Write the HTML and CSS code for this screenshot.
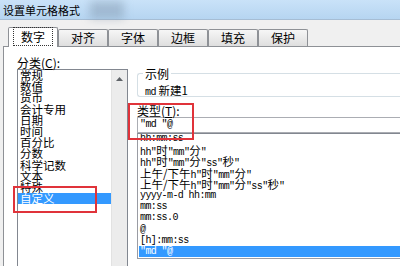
FILE: index.html
```html
<!DOCTYPE html>
<html>

<head>
    <meta charset="utf-8">
    <link rel="stylesheet" href="styles.css">
    <title>设置单元格格式</title>
</head>

<body>
    <div class="titlebar">
        <span class="title">设置单元格格式</span>
        <span class="smudge"></span>
    </div>

    <div class="dialog">
        <div class="tabs">
            <div class="tab active"><span class="focus">数字</span></div>
            <div class="tab">对齐</div>
            <div class="tab">字体</div>
            <div class="tab">边框</div>
            <div class="tab">填充</div>
            <div class="tab">保护</div>
        </div>

        <div class="panel">
            <div class="cat">
                <div class="lbl">分类(<u>C</u>):</div>
                <div class="catlist">
                    <ul class="items">
                        <li>常规</li>
                        <li>数值</li>
                        <li>货币</li>
                        <li>会计专用</li>
                        <li>日期</li>
                        <li>时间</li>
                        <li>百分比</li>
                        <li>分数</li>
                        <li>科学记数</li>
                        <li>文本</li>
                        <li>特殊</li>
                        <li class="sel">自定义</li>
                    </ul>
                    <div class="vscroll">
                        <div class="btn">
                            <svg width="7" height="4" viewBox="0 0 7 4"><path d="M0 4 L3.5 0 L7 4 Z" fill="#5f6368"/></svg>
                        </div>
                    </div>
                </div>
            </div>

            <div class="type">
                <fieldset class="sample">
                    <legend>示例</legend>
                    <div class="sample-text"><span class="m">md</span> 新建1</div>
                </fieldset>

                <div class="lbl lbl-type">类型(<u>T</u>):</div>
                <div class="typebox m">"md "@</div>

                <ul class="typelist">
                    <li class="m cut">hh:mm:ss</li>
                    <li class="m">hh"<span class="zh">时</span>"mm"<span class="zh">分</span>"</li>
                    <li class="m">hh"<span class="zh">时</span>"mm"<span class="zh">分</span>"ss"<span class="zh">秒</span>"</li>
                    <li class="m"><span class="zh">上午/下午</span>h"<span class="zh">时</span>"mm"<span class="zh">分</span>"</li>
                    <li class="m"><span class="zh">上午/下午</span>h"<span class="zh">时</span>"mm"<span class="zh">分</span>"ss"<span class="zh">秒</span>"</li>
                    <li class="m">yyyy-m-d hh:mm</li>
                    <li class="m">mm:ss</li>
                    <li class="m">mm:ss.0</li>
                    <li class="m">@</li>
                    <li class="m">[h]:mm:ss</li>
                    <li class="m sel">"md "@</li>
                </ul>
            </div>

            <!-- rote Markierungen -->
            <div class="mark mark-cat"></div>
            <div class="mark mark-type"></div>
        </div>
    </div>
</body>

</html>
```

FILE: styles.css
```css
body {
    margin: 0;
    width: 400px;
    height: 266px;
    overflow: hidden;
    background-color: #f0f0f0;
    font-family: "Noto Sans CJK SC", "Liberation Sans", sans-serif;
    font-size: 12px;
    color: #000;
}

.titlebar {
    height: 20px;
    box-sizing: border-box;
    display: flex;
    align-items: center;
    padding-left: 3px;
    background: linear-gradient(#c9e2f8, #b6d5f1);
    border-bottom: 1px solid #a6bdd4;
}

.title {
    font-size: 11px;
    line-height: 14px;
}

.smudge {
    width: 34px;
    height: 18px;
    margin-left: 10px;
    background-color: rgba(105, 125, 150, 0.35);
    filter: blur(4px);
}

.dialog {
    padding: 7px 0 0 3px;
}

.tabs {
    display: flex;
    align-items: flex-end;
    height: 19px;
    margin-left: 5px;
}

.tab {
    width: 50px;
    height: 17px;
    box-sizing: border-box;
    border: 1px solid #8e9196;
    border-bottom: none;
    border-radius: 2px 2px 0 0;
    background: linear-gradient(#f6f6f6, #dedede);
    text-align: center;
    line-height: 15px;
}

.tab.active {
    height: 20px;
    margin-bottom: -1px;
    background: #fff;
    position: relative;
    z-index: 1;
    line-height: 18px;
}

.focus {
    outline: 1px dotted #333;
    padding: 0 7px;
}

.panel {
    position: relative;
    display: flex;
    height: 210px;
    padding: 9px 0 0 13px;
    background-color: #fff;
    border-top: 1px solid #8e9196;
    border-left: 1px solid #8e9196;
    overflow: hidden;
}

.lbl {
    line-height: 13px;
}

.cat {
    width: 111px;
    flex-shrink: 0;
}

.catlist {
    display: flex;
    height: 197px;
    box-sizing: border-box;
    border: 1px solid #828790;
    border-bottom: none;
}

.items {
    flex: 1;
    list-style: none;
    margin: 0;
    padding: 0;
    font-size: 11.5px;
}

.items li {
    height: 11.2px;
    line-height: 11.2px;
    padding-left: 2px;
    white-space: nowrap;
}

.sel {
    background-color: #3399ff;
    color: #fff;
}

.vscroll {
    width: 15px;
    background-color: #ececec;
    border-left: 1px solid #e2e2e2;
}

.btn {
    height: 17px;
    display: flex;
    align-items: center;
    justify-content: center;
}

.type {
    flex: 1;
    min-width: 0;
    margin-left: 9px;
    padding-top: 11px;
}

.sample {
    margin: 0;
    padding: 0 0 0 7px;
    border: 1px solid #d5dfe5;
    border-right: none;
    border-radius: 3px 0 0 3px;
}

.sample legend {
    padding: 0 2px;
    margin-left: -2px;
    line-height: 13px;
}

.sample-text {
    margin-top: 5px;
    line-height: 11px;
    height: 11px;
}

.m {
    font-family: "Liberation Mono", monospace;
    font-size: 10px;
    letter-spacing: -0.6px;
}

.zh,
.sample-text {
    font-family: "Noto Sans CJK SC", sans-serif;
    font-size: 11.5px;
    letter-spacing: 0;
}

.lbl-type {
    margin-top: 7px;
}

.typebox {
    height: 16px;
    box-sizing: border-box;
    border: 1px solid #abadb3;
    border-right: none;
    padding-left: 2px;
    line-height: 14px;
}

.typelist {
    list-style: none;
    margin: 0;
    padding: 0 0 0 1px;
    height: 126px;
    box-sizing: border-box;
    border: 1px solid #9a9ca3;
    border-top-color: #828790;
    border-right: none;
    overflow: hidden;
}

.typelist li {
    height: 11.2px;
    line-height: 11.2px;
    padding-left: 1px;
    white-space: nowrap;
}

.typelist li.cut {
    line-height: 9px;
}

.mark {
    position: absolute;
    box-sizing: border-box;
    border: 2px solid #e0333a;
}

.mark-cat {
    left: 9px;
    top: 139px;
    width: 84px;
    height: 27px;
}

.mark-type {
    left: 124px;
    top: 56px;
    width: 66px;
    height: 37px;
}
```
